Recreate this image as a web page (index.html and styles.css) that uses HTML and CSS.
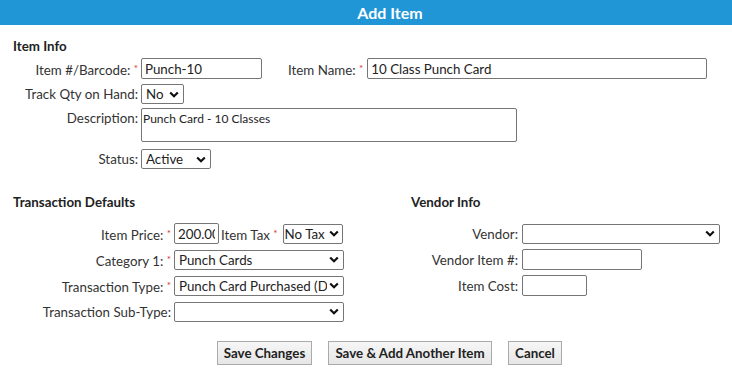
FILE: index.html
```html
<!DOCTYPE html>
<html>
<head>
<meta charset="utf-8">
<link rel="stylesheet" href="styles.css">
</head>
<body>
<div class="header"><span class="title">Add Item</span></div>
<div class="content">
  <div class="section-title">Item Info</div>
  <div class="row r1">
    <label class="lbl w1">Item #/Barcode: <span class="req">*</span></label>
    <input class="in w-code" type="text" value="Punch-10">
    <label class="lbl name-lbl">Item Name: <span class="req">*</span></label>
    <input class="in w-name" type="text" value="10 Class Punch Card">
  </div>
  <div class="row r2">
    <label class="lbl w1">Track Qty on Hand:</label>
    <select class="sel w-track"><option>No</option></select>
  </div>
  <div class="row r3 top">
    <label class="lbl w1 desc-lbl">Description:</label>
    <textarea class="ta">Punch Card - 10 Classes</textarea>
  </div>
  <div class="row r4">
    <label class="lbl w1">Status:</label>
    <select class="sel w-status"><option>Active</option></select>
  </div>

  <div class="cols">
    <div class="col-left">
      <div class="section-title">Transaction Defaults</div>
      <div class="row rr first">
        <label class="lbl w2">Item Price: <span class="req">*</span></label>
        <input class="in w-price" type="text" value="200.00">
        <label class="lbl tax-lbl">Item Tax <span class="req">*</span></label>
        <select class="sel w-tax"><option>No Tax</option></select>
      </div>
      <div class="row rr">
        <label class="lbl w2">Category 1: <span class="req">*</span></label>
        <select class="sel w-cat"><option>Punch Cards</option></select>
      </div>
      <div class="row rr">
        <label class="lbl w2">Transaction Type: <span class="req">*</span></label>
        <select class="sel w-cat"><option>Punch Card Purchased (Debit)</option></select>
      </div>
      <div class="row rr">
        <label class="lbl w2">Transaction Sub-Type:</label>
        <select class="sel w-cat"><option></option></select>
      </div>
    </div>
    <div class="col-right">
      <div class="section-title">Vendor Info</div>
      <div class="row rr first">
        <label class="lbl w3">Vendor:</label>
        <select class="sel w-vendor"><option></option></select>
      </div>
      <div class="row rr">
        <label class="lbl w3">Vendor Item #:</label>
        <input class="in w-vitem" type="text" value="">
      </div>
      <div class="row rr">
        <label class="lbl w3">Item Cost:</label>
        <input class="in w-cost" type="text" value="">
      </div>
    </div>
  </div>

  <div class="buttons">
    <button class="btn b1">Save Changes</button>
    <button class="btn b2">Save &amp; Add Another Item</button>
    <button class="btn b3">Cancel</button>
  </div>
</div>
</body>
</html>
```
FILE: styles.css
```css
html, body {
  margin: 0;
  padding: 0;
  background: #fff;
}
body {
  font-family: Lato, "Open Sans", sans-serif;
  font-size: 13.33px;
  color: #333;
  width: 732px;
  overflow: hidden;
}
.header {
  height: 25px;
  background: #2196d6;
  color: #fff;
  font-weight: bold;
  font-size: 16px;
  line-height: 25px;
  text-align: center;
  padding-left: 48px;
}
.content {
  padding-left: 13px;
}
.section-title {
  font-weight: bold;
  color: #222;
  line-height: 16px;
  height: 16px;
}
.content > .section-title {
  margin-top: 13px;
}
.row {
  display: flex;
  align-items: center;
}
.row.top {
  align-items: flex-start;
}
.lbl {
  text-align: right;
  white-space: nowrap;
  line-height: 16px;
}
.req {
  color: #d9302c;
  font-size: 10px;
  vertical-align: 3px;
}
.w1 { width: 125px; margin-right: 3px; }
.w2 { width: 158px; margin-right: 3px; }
.w3 { width: 107px; margin-right: 4px; }
.name-lbl { margin-left: 26px; margin-right: 4px; }
.tax-lbl { margin-left: 2px; margin-right: 5px; }
.desc-lbl { padding-top: 2px; }

.in, .ta, .sel {
  font-family: Lato, "Open Sans", sans-serif;
  font-size: 13.33px;
  color: #222;
  box-sizing: border-box;
  border: 1px solid #767676;
  border-radius: 2px;
  margin: 0;
  background-color: #fff;
}
.in {
  height: 21px;
  padding: 1px 3px;
}
.sel {
  -webkit-appearance: none;
  appearance: none;
  height: 20px;
  padding: 0 16px 0 4px;
  background-image: url("data:image/svg+xml;utf8,<svg xmlns='http://www.w3.org/2000/svg' width='10' height='7' viewBox='0 0 10 7'><polyline points='1.2,1.5 5,5.2 8.8,1.5' fill='none' stroke='%23111' stroke-width='2.2'/></svg>");
  background-repeat: no-repeat;
  background-position: right 4px center;
  white-space: nowrap;
  overflow: hidden;
  text-overflow: clip;
}
.ta {
  width: 376px;
  height: 34px;
  padding: 2px 1px;
  font-size: 12px;
  line-height: 15px;
  resize: none;
  overflow: hidden;
}
.r1 { margin-top: 4px; height: 21px; }
.r2 { margin-top: 5px; height: 20px; }
.r3 { margin-top: 4px; height: 34px; }
.r4 { margin-top: 7px; height: 20px; }

.w-code { width: 121px; }
.w-name { width: 340px; }
.w-track { width: 43px; }
.w-status { width: 70px; }
.w-price { width: 45px; }
.w-tax { width: 60px; padding-left: 1px; padding-right: 12px; background-position: right 3px center; }
.w-cat { width: 170px; }
.w-vendor { width: 198px; }
.w-vitem { width: 120px; }
.w-cost { width: 65px; }

.cols {
  display: flex;
  margin-top: 25px;
}
.col-left {
  width: 398px;
}
.col-right {
  flex: 1;
}
.rr { height: 21px; margin-top: 5px; }
.rr.first { margin-top: 13px; }

.buttons {
  display: flex;
  gap: 16px;
  margin-top: 19px;
  margin-left: 204px;
}
.btn {
  font-family: Lato, "Open Sans", sans-serif;
  font-size: 13.33px;
  font-weight: bold;
  color: #222;
  height: 24px;
  padding: 0 4px;
  background: linear-gradient(#f6f6f6, #e6e6e6);
  border: 1px solid #aaa;
  border-radius: 0;
  margin: 0;
}
.b1 { width: 95px; }
.b2 { width: 164px; }
.b3 { width: 54px; }
```
